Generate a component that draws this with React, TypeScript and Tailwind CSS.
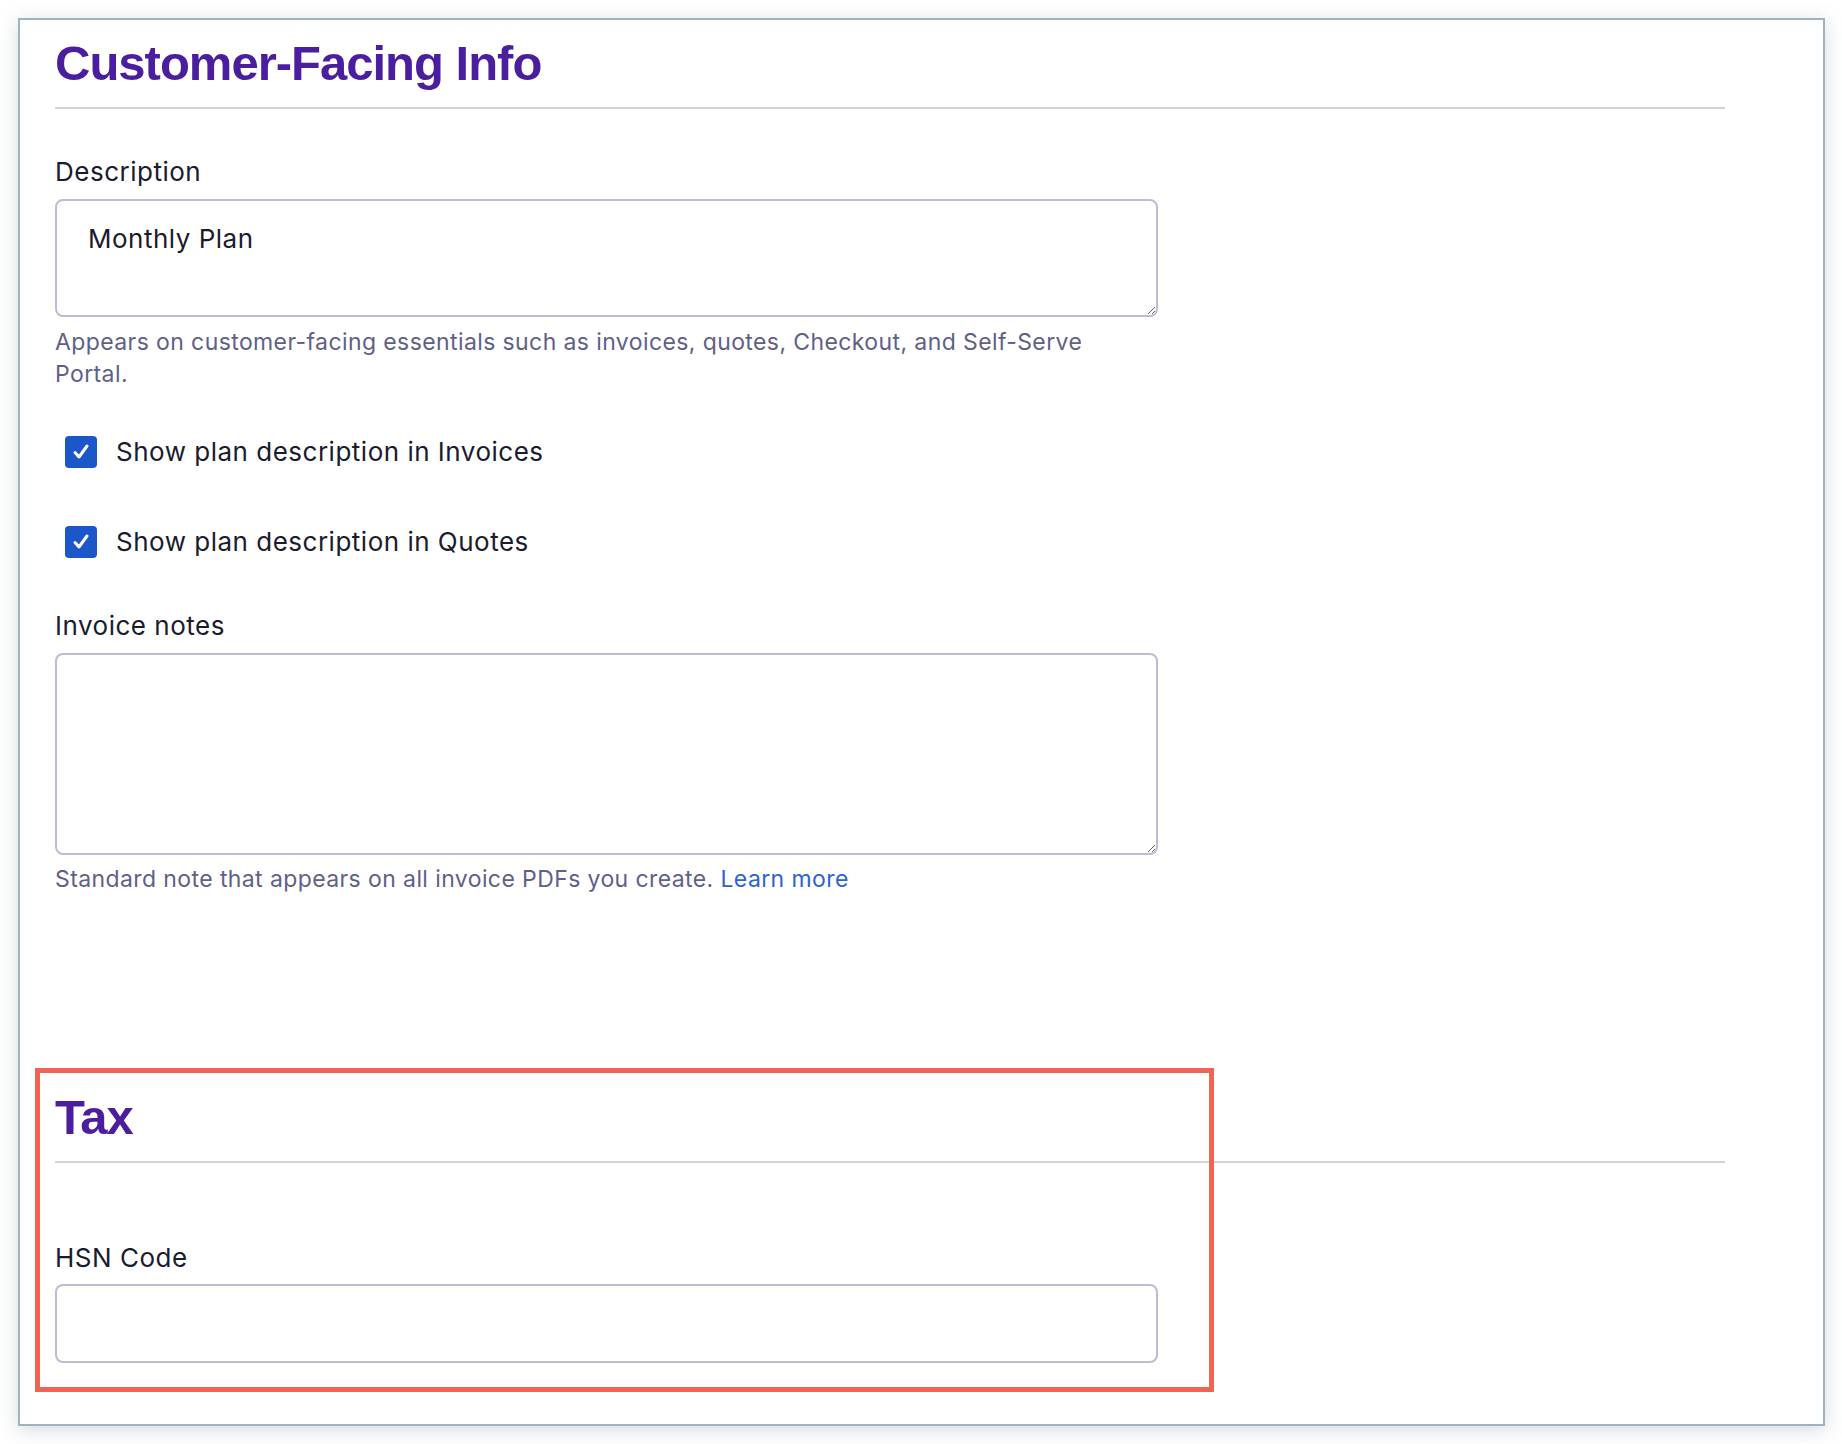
import React from "react";

const body = { fontFamily: "Inter, 'Noto Sans', sans-serif" };
const head = { fontFamily: "'Liberation Sans', Arial, sans-serif" };

function SectionHeading({ title }: { title: string }) {
  return (
    <div className="border-b-2 border-[#d3d3d3] pb-[19px]">
      <h2
        style={head}
        className="text-[49px] leading-[49px] font-bold tracking-[-1px] text-[#4a1e9e]"
      >
        {title}
      </h2>
    </div>
  );
}

function Checkbox({ label, className }: { label: string; className?: string }) {
  return (
    <label className={`flex items-center gap-[19px] pl-[10px] ${className ?? ""}`}>
      <span className="flex h-[32px] w-[32px] items-center justify-center rounded-[4px] bg-[#1c57c9]">
        <svg width="22" height="22" viewBox="0 0 22 22" fill="none">
          <polyline
            points="5,11.5 9,16 17,5"
            stroke="white"
            strokeWidth="3"
            strokeLinecap="round"
            strokeLinejoin="round"
          />
        </svg>
      </span>
      <span className="text-[26px] leading-[32px] tracking-[0.5px] text-[#1a1b2e]">{label}</span>
    </label>
  );
}

export default function App() {
  return (
    <div style={body} className="min-h-screen bg-white pt-[18px] pl-[18px] pr-[17px] pb-[18px]">
      <div className="min-h-[1408px] border-2 border-[#9fb2bf] bg-white pl-[35px] pt-[19px] pb-[61px] shadow-[0_4px_18px_rgba(90,110,125,0.25)]">
        <div className="w-[1670px]">
          {/* Customer-facing info */}
          <SectionHeading title="Customer-Facing Info" />

          <div className="mt-[47px] w-[1103px]">
            <div className="text-[26px] leading-[32px] tracking-[0.5px] text-[#1a1b2e]">Description</div>
            <textarea
              defaultValue="Monthly Plan"
              className="mt-[11px] block h-[118px] w-full rounded-[8px] border-2 border-[#bcbdd4] pt-[22px] pl-[31px] text-[26px] leading-[32px] tracking-[0.5px] text-[#1a1b2e] outline-none"
            />
            <p className="mt-[9px] text-[23px] leading-[32px] tracking-[0.4px] text-[#5f6088]">
              Appears on customer-facing essentials such as invoices, quotes, Checkout, and Self-Serve Portal.
            </p>

            <Checkbox label="Show plan description in Invoices" className="mt-[46px]" />
            <Checkbox label="Show plan description in Quotes" className="mt-[58px]" />

            <div className="mt-[52px] text-[26px] leading-[32px] tracking-[0.5px] text-[#1a1b2e]">Invoice notes</div>
            <textarea className="mt-[11px] block h-[202px] w-full rounded-[8px] border-2 border-[#bcbdd4] outline-none" />
            <p className="mt-[8px] text-[23px] leading-[32px] tracking-[0.4px] text-[#5f6088]">
              Standard note that appears on all invoice PDFs you create.{" "}
              <a className="text-[#2b63d3]" href="#">
                Learn more
              </a>
            </p>
          </div>

          {/* Tax */}
          <div className="relative mt-[198px]">
            <div className="pointer-events-none absolute left-[-20px] top-[-25px] h-[324px] w-[1179px] border-[5px] border-[#ee6553]" />
            <SectionHeading title="Tax" />
            <div className="mt-[79px] w-[1103px]">
              <div className="text-[26px] leading-[32px] tracking-[0.5px] text-[#1a1b2e]">HSN Code</div>
              <input className="mt-[10px] block h-[79px] w-full rounded-[8px] border-2 border-[#bcbdd4] px-[31px] text-[26px] outline-none" />
            </div>
          </div>
        </div>
      </div>
    </div>
  );
}
